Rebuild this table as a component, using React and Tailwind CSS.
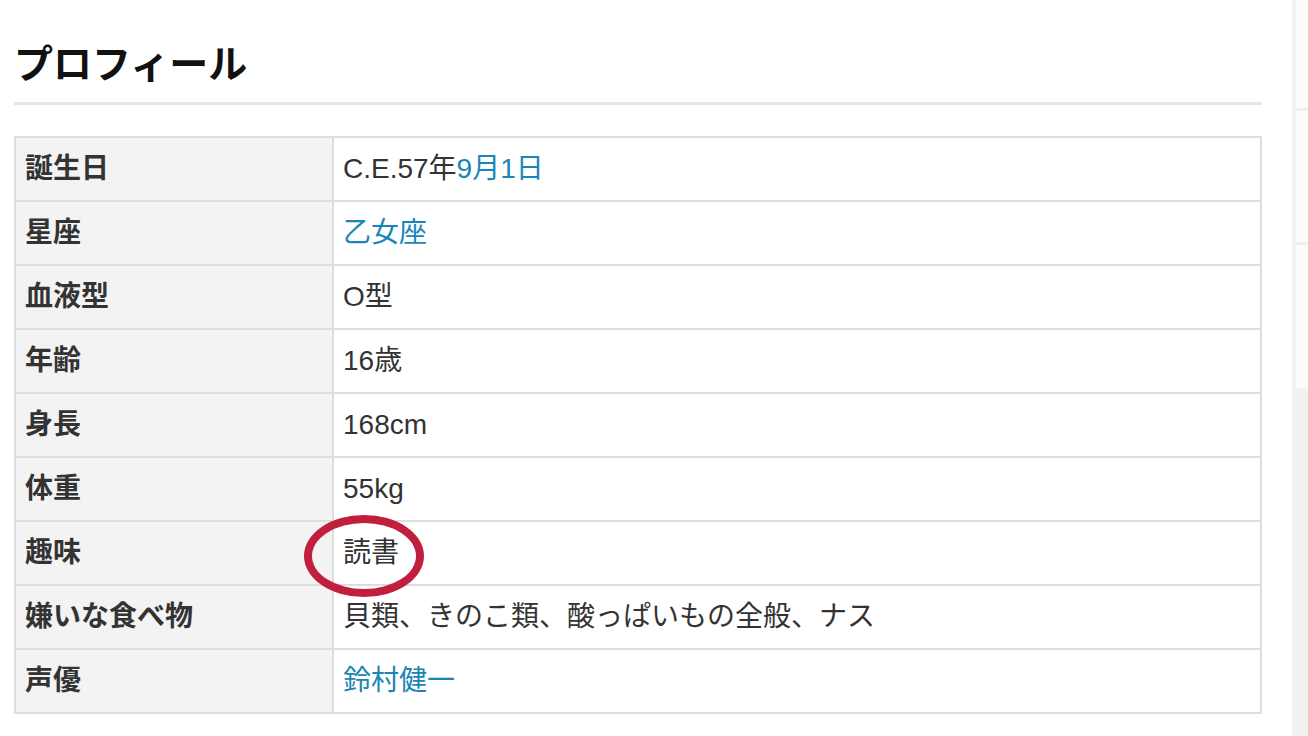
import React from 'react';

const rows = [
  { label: '誕生日', value: (<>C.E.57年<a className="text-[#1a86b6]">9月1日</a></>) },
  { label: '星座', value: <a className="text-[#1a86b6]">乙女座</a> },
  { label: '血液型', value: 'O型' },
  { label: '年齢', value: '16歳' },
  { label: '身長', value: '168cm' },
  { label: '体重', value: '55kg' },
  { label: '趣味', value: '読書', marked: true },
  { label: '嫌いな食べ物', value: '貝類、きのこ類、酸っぱいもの全般、ナス' },
  { label: '声優', value: <a className="text-[#1a86b6]">鈴村健一</a> },
];

export default function App() {
  return (
    <div
      className="flex min-h-[736px] bg-white text-[#333]"
      style={{ fontFamily: '"Liberation Sans", "Noto Sans CJK JP", sans-serif' }}
    >
      {/* main column */}
      <main className="w-[1292px] pl-[14px] pr-[30px]">
        <h2 className="pt-[37px] pb-[9px] text-[39px] font-bold leading-[56px] text-[#111] border-b-[3px] border-[#e6e6e6]">
          プロフィール
        </h2>

        <table className="mt-[31px] w-full border-collapse border-2 border-[#dddddd] text-[28px]">
          <tbody>
            {rows.map((row) => (
              <tr key={row.label} className="h-[64px]">
                <th className="w-[318px] border-2 border-[#dddddd] bg-[#f3f3f3] px-[9px] text-left font-bold">
                  {row.label}
                </th>
                <td className="relative border-2 border-[#dddddd] px-[9px]">
                  {row.value}
                  {row.marked && (
                    <span className="pointer-events-none absolute left-[-30px] top-[-7px] h-[82px] w-[120px] rounded-[50%] border-[8px] border-[#c11f3e]" />
                  )}
                </td>
              </tr>
            ))}
          </tbody>
        </table>
      </main>

      {/* sidebar edge */}
      <aside className="flex flex-1 flex-col border-l-4 border-[#f3f3f3]">
        <div className="h-[108px] bg-[#fbfbfb]" />
        <div className="h-[134px] border-t-[3px] border-[#efefef] bg-[#fbfbfb]" />
        <div className="h-[146px] border-t-[3px] border-[#efefef] bg-[#fbfbfb]" />
        <div className="flex-1 bg-[#f1f1f1]" />
      </aside>
    </div>
  );
}
